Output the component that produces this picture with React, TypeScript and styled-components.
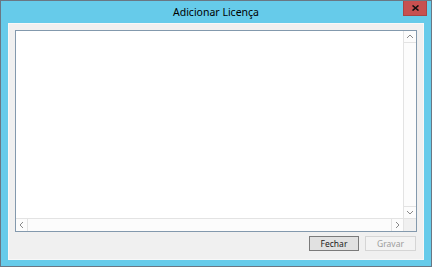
import React from "react";
import styled, { createGlobalStyle } from "styled-components";

const Global = createGlobalStyle`
  html, body { margin: 0; padding: 0; background: #ffffff; }
  * { box-sizing: border-box; }
`;

const Window = styled.div`
  width: 432px;
  height: 267px;
  border: 1px solid #6a7784;
  background: #66cbea;
  display: flex;
  flex-direction: column;
  font-family: "Noto Sans", "Open Sans", sans-serif;
`;

const TitleBar = styled.div`
  height: 22px;
  display: grid;
  grid-template-columns: 1fr auto 1fr;
  align-items: start;
`;

const Title = styled.div`
  grid-column: 2;
  font-size: 10.5px;
  line-height: 13px;
  margin-top: 5px;
  color: #000;
`;

const Close = styled.div`
  grid-column: 3;
  justify-self: end;
  width: 24px;
  height: 15px;
  margin-right: 4px;
  background: #c75050;
  border: 1px solid #a84545;
  border-top: none;
  display: flex;
  align-items: center;
  justify-content: center;
`;

const Client = styled.div`
  flex: 1;
  margin: 0 7px 6px 7px;
  background: #f0f0f0;
  border: 1px solid #f8f8f8;
  display: flex;
  flex-direction: column;
  padding: 6px 6px 8px 6px;
`;

const TextBox = styled.div`
  height: 202px;
  border: 1px solid #8399ad;
  background: #fff;
  display: grid;
  grid-template-columns: 1fr 13px;
  grid-template-rows: 1fr 13px;
`;

const Editor = styled.div`
  background: #fff;
`;

const VScroll = styled.div`
  background: #fcfcfc;
  border-left: 1px solid #e3e3e3;
  display: flex;
  flex-direction: column;
  justify-content: space-between;
`;

const HScroll = styled.div`
  background: #fcfcfc;
  border-top: 1px solid #e3e3e3;
  display: flex;
  justify-content: space-between;
`;

const Corner = styled.div`
  background: #f0f0f0;
  border-top: 1px solid #e3e3e3;
  border-left: 1px solid #e3e3e3;
`;

const ArrowBox = styled.div<{ $edge: "top" | "bottom" | "left" | "right" }>`
  width: ${(p) => (p.$edge === "left" || p.$edge === "right" ? "12px" : "100%")};
  height: ${(p) => (p.$edge === "top" || p.$edge === "bottom" ? "12px" : "100%")};
  display: flex;
  align-items: center;
  justify-content: center;
  ${(p) =>
    p.$edge === "top"
      ? "border-bottom: 1px solid #e3e3e3;"
      : p.$edge === "bottom"
      ? "border-top: 1px solid #e3e3e3;"
      : p.$edge === "left"
      ? "border-right: 1px solid #e3e3e3;"
      : "border-left: 1px solid #e3e3e3;"}
`;

const Footer = styled.div`
  margin-top: 4px;
  display: flex;
  justify-content: flex-end;
  gap: 6px;
  padding-right: 1px;
`;

const Button = styled.div<{ $disabled?: boolean }>`
  height: 15px;
  width: ${(p) => (p.$disabled ? "51px" : "50px")};
  border: 1px solid ${(p) => (p.$disabled ? "#d5d5d5" : "#7a7a7a")};
  background: ${(p) => (p.$disabled ? "#f3f3f3" : "#e1e1e1")};
  color: ${(p) => (p.$disabled ? "#9c9c9c" : "#1a1a1a")};
  font-size: 8.5px;
  line-height: 13px;
  text-align: center;
`;

const Chevron = ({ dir }: { dir: "up" | "down" | "left" | "right" }) => {
  const pts: Record<string, string> = {
    up: "1,5 4,2 7,5",
    down: "1,2 4,5 7,2",
    left: "5,1 2,4 5,7",
    right: "2,1 5,4 2,7",
  };
  const w = dir === "up" || dir === "down" ? 8 : 7;
  const h = dir === "up" || dir === "down" ? 7 : 8;
  return (
    <svg width={w} height={h} viewBox={`0 0 ${w} ${h}`}>
      <polyline points={pts[dir]} fill="none" stroke="#8a8a8a" strokeWidth="1" />
    </svg>
  );
};

export default function App() {
  return (
    <>
      <Global />
      <Window>
        <TitleBar>
          <Title>Adicionar Licença</Title>
          <Close>
            <svg width="7" height="6" viewBox="0 0 7 6">
              <path d="M0.5 0.5 L6.5 5.5 M6.5 0.5 L0.5 5.5" stroke="#111" strokeWidth="1.6" />
            </svg>
          </Close>
        </TitleBar>
        <Client>
          <TextBox>
            <Editor />
            <VScroll>
              <ArrowBox $edge="top"><Chevron dir="up" /></ArrowBox>
              <ArrowBox $edge="bottom"><Chevron dir="down" /></ArrowBox>
            </VScroll>
            <HScroll>
              <ArrowBox $edge="left"><Chevron dir="left" /></ArrowBox>
              <ArrowBox $edge="right"><Chevron dir="right" /></ArrowBox>
            </HScroll>
            <Corner />
          </TextBox>
          <Footer>
            <Button>Fechar</Button>
            <Button $disabled>Gravar</Button>
          </Footer>
        </Client>
      </Window>
    </>
  );
}
